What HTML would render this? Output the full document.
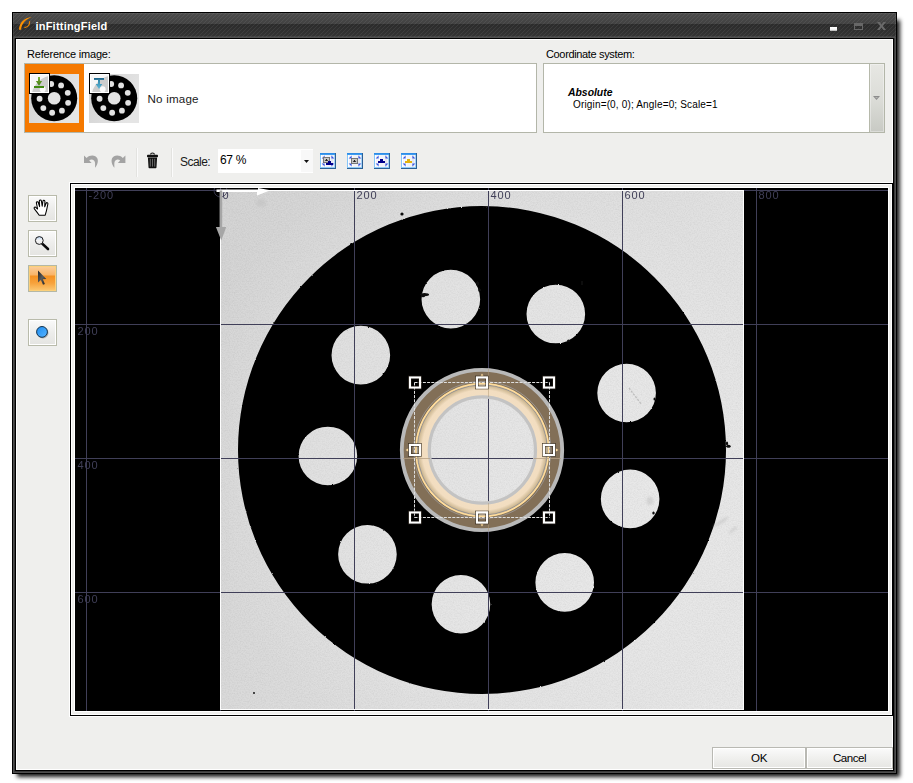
<!DOCTYPE html>
<html><head><meta charset="utf-8"><title>inFittingField</title>
<style>
*{box-sizing:border-box;margin:0;padding:0}
html,body{width:913px;height:783px;background:#fff;overflow:hidden}
body{position:relative;font-family:"Liberation Sans",sans-serif;font-size:11px;color:#000}
.abs{position:absolute}
#shadow{position:absolute;left:17px;top:20px;width:883px;height:756.5px;background:rgba(0,0,0,.9);filter:blur(2.2px)}
#win{position:absolute;left:12px;top:12px;width:885px;height:762px;background:#000}
#frame1{position:absolute;left:1px;top:1px;right:1px;bottom:1px;background:#4f4f4f}
#frame2{position:absolute;left:2px;top:2px;right:2px;bottom:2px;background:#3a3a3a}
#tbar{position:absolute;left:1px;top:1px;right:1px;height:24px;
 background:
  repeating-linear-gradient(135deg,rgba(255,255,255,.065) 0,rgba(255,255,255,.065) 0.8px,rgba(0,0,0,0) 0.8px,rgba(0,0,0,0) 2.83px),
  linear-gradient(#4a4a4a 0,#424242 11px,#2b2b2b 11px,#343434 24px);box-shadow:inset 0 0 0 1px rgba(255,255,255,.07)}
#tline{position:absolute;left:1px;right:1px;top:25px;height:1px;background:#505050}
#inner{position:absolute;left:3px;top:26px;right:3px;bottom:3px;background:#000}
#content{position:absolute;left:4px;top:27px;right:4px;bottom:4px;background:#efefed;border:1px solid #fff}
#title{position:absolute;left:35.5px;top:20px;color:#fff;font-weight:bold;font-size:11px;line-height:13px;white-space:nowrap;letter-spacing:.21px}
.lbl{position:absolute;white-space:nowrap;line-height:13px;font-size:11px}
.panel{position:absolute;background:#fff;border:1px solid #b3b6a9}
.btn{position:absolute;border:1px solid #b9b9b3;background:linear-gradient(#fbfbfb,#f1f1ef 45%,#e6e6e3);box-shadow:inset 0 0 0 1px #fff;text-align:center;font-size:11.6px;letter-spacing:-0.5px}
.tool{position:absolute;left:28px;width:29px;height:27px;border:1px solid #b9bbab;background:linear-gradient(#fafafa,#ededeb 50%,#e4e4e1);box-shadow:inset 0 0 0 1px #fff}
.tool.on{border-color:#b4b8a6;background:linear-gradient(#fbcf9e 0,#f9b468 9px,#f59122 10px,#f7a23c 17px,#fcc56e 24px,#ffd98a 25px);box-shadow:inset 0 0 0 1px #fbd07a}
#cvbox{position:absolute;left:69px;top:182px;width:824px;height:535px;background:#fff}
#cvbox2{position:absolute;left:70px;top:183px;width:823px;height:533px;background:#efefed;border:1px solid #000;box-shadow:inset 0 0 0 1px #fff}
#cvbox3{position:absolute;left:74px;top:187px;width:815px;height:525px;background:#fff}
.cv{position:absolute;left:75px;top:188px;display:block}
</style></head><body>
<div id="shadow"></div><div id="win"><div id="frame1"></div><div id="frame2"></div><div id="tbar"></div><div id="tline"></div><div id="inner"></div><div id="content"></div></div>
<svg class="abs" style="left:16px;top:14px" width="20" height="20" viewBox="16 14 20 20"><path d="M19 29.8C19 22.5 24.4 17.6 31.8 16.9C26 19.1 21.5 23.1 21.1 29.8Z" fill="#ff9200"/><path d="M29.6 21.2C30.1 24.6 28 27.1 24.4 27.6" fill="none" stroke="#f08800" stroke-width="1.1"/></svg>

<div id="title">inFittingField</div>
<div class="abs" style="left:830px;top:27px;width:7px;height:3.5px;background:linear-gradient(#fff 0,#f4f4f4 60%,#aaa 100%)"></div>
<div class="abs" style="left:854px;top:23px;width:9px;height:7px;border:1px solid #676767;border-top-width:3px"></div>
<svg class="abs" style="left:877px;top:22px" width="9" height="8" viewBox="0 0 9 8"><path d="M0 0H2.6L4.5 2.6L6.4 0H9L5.9 4L9 8H6.4L4.5 5.4L2.6 8H0L3.1 4Z" fill="#6a6a6a"/></svg>

<div class="lbl" style="left:27px;top:48px;letter-spacing:-0.2px">Reference image:</div>
<div class="lbl" style="left:546px;top:48px;letter-spacing:-0.35px">Coordinate system:</div>
<div class="panel" style="left:24px;top:63px;width:513px;height:70px"></div>
<div class="abs" style="left:25px;top:64px;width:59px;height:68px;background:#f57900"></div>
<svg class="abs" style="left:29px;top:74px" width="50" height="49" viewBox="0 0 50 49">
<defs><filter id="tb29" x="-10%" y="-10%" width="120%" height="120%"><feGaussianBlur stdDeviation="0.45"/></filter></defs>
<linearGradient id="tg29" x1="0" y1="0" x2="1" y2=".45"><stop offset="0" stop-color="#d0d0d0"/><stop offset="1" stop-color="#e5e5e5"/></linearGradient><rect width="50" height="49" fill="url(#tg29)"/>
<g filter="url(#tb29)">
<circle cx="25.2" cy="24.3" r="23.01" fill="#060606"/>
<circle cx="22.19" cy="10.00" r="2.91" fill="#e2e2e2"/>
<circle cx="32.08" cy="11.41" r="2.91" fill="#e2e2e2"/>
<circle cx="38.76" cy="18.85" r="2.91" fill="#e2e2e2"/>
<circle cx="39.09" cy="28.84" r="2.91" fill="#e2e2e2"/>
<circle cx="32.92" cy="36.71" r="2.91" fill="#e2e2e2"/>
<circle cx="23.14" cy="38.77" r="2.91" fill="#e2e2e2"/>
<circle cx="14.32" cy="34.06" r="2.91" fill="#e2e2e2"/>
<circle cx="10.59" cy="24.78" r="2.91" fill="#e2e2e2"/>
<circle cx="13.70" cy="15.28" r="2.91" fill="#e2e2e2"/>
<circle cx="25.2" cy="24.3" r="6.32" fill="#e2e2e2"/>
</g></svg>
<svg class="abs" style="left:89px;top:74px" width="50" height="49" viewBox="0 0 50 49">
<defs><filter id="tb89" x="-10%" y="-10%" width="120%" height="120%"><feGaussianBlur stdDeviation="0.45"/></filter></defs>
<linearGradient id="tg89" x1="0" y1="0" x2="1" y2=".45"><stop offset="0" stop-color="#d0d0d0"/><stop offset="1" stop-color="#e5e5e5"/></linearGradient><rect width="50" height="49" fill="url(#tg89)"/>
<g filter="url(#tb89)">
<circle cx="25.2" cy="24.3" r="23.01" fill="#060606"/>
<circle cx="22.19" cy="10.00" r="2.91" fill="#e2e2e2"/>
<circle cx="32.08" cy="11.41" r="2.91" fill="#e2e2e2"/>
<circle cx="38.76" cy="18.85" r="2.91" fill="#e2e2e2"/>
<circle cx="39.09" cy="28.84" r="2.91" fill="#e2e2e2"/>
<circle cx="32.92" cy="36.71" r="2.91" fill="#e2e2e2"/>
<circle cx="23.14" cy="38.77" r="2.91" fill="#e2e2e2"/>
<circle cx="14.32" cy="34.06" r="2.91" fill="#e2e2e2"/>
<circle cx="10.59" cy="24.78" r="2.91" fill="#e2e2e2"/>
<circle cx="13.70" cy="15.28" r="2.91" fill="#e2e2e2"/>
<circle cx="25.2" cy="24.3" r="6.32" fill="#e2e2e2"/>
</g></svg>
<div class="abs" style="left:29px;top:73px;width:21px;height:21px;border:1px solid #000;background:rgba(255,255,255,.8);box-shadow:inset 0 0 0 1px #fff"></div>
<div class="abs" style="left:89px;top:73px;width:21px;height:21px;border:1px solid #000;background:rgba(255,255,255,.8);box-shadow:inset 0 0 0 1px #fff"></div>
<svg class="abs" style="left:30px;top:74px" width="19" height="19" viewBox="0 0 19 19"><defs><linearGradient id="gg" x1="0" y1="0" x2="0" y2="1"><stop offset="0" stop-color="#7fb23a"/><stop offset="1" stop-color="#3f7a12"/></linearGradient></defs><path d="M8 3H10V7H12.2L9 11.8L5.8 7H8Z" fill="url(#gg)"/><rect x="4" y="12" width="10" height="2" fill="#418a12"/></svg>
<svg class="abs" style="left:90px;top:74px" width="19" height="19" viewBox="0 0 19 19"><defs><linearGradient id="bg2" x1="0" y1="0" x2="0" y2="1"><stop offset="0" stop-color="#2f86a8"/><stop offset="1" stop-color="#5fb6d8"/></linearGradient></defs><rect x="4" y="4" width="10" height="1.9" fill="#1f6a90"/><path d="M8 5.8H10V10H12.3L9 15.1L5.7 10H8Z" fill="url(#bg2)"/></svg>
<div class="lbl" style="left:147.5px;top:92px;font-size:11.6px;color:#1a1a1a;letter-spacing:0.2px">No image</div>
<div class="panel" style="left:543px;top:63px;width:342px;height:70px"></div>
<div class="abs" style="left:869px;top:64px;width:15px;height:68px;background:linear-gradient(#e7e7e3,#dcddd8 50%,#c8cac4);border-left:1px solid #b6b9ab;box-shadow:inset 0 0 0 1px rgba(255,255,255,.35)"></div>
<svg class="abs" style="left:873px;top:96px" width="7" height="4"><path d="M0 0H7L3.5 4Z" fill="#8c8c8c"/><path d="M2 1H5L3.5 2.6Z" fill="#b5b5b2"/></svg>
<div class="lbl" style="left:568px;top:86px;font-weight:bold;font-style:italic;font-size:10.4px">Absolute</div>
<div class="lbl" style="left:573px;top:98px;font-size:10px;letter-spacing:0.16px">Origin=(0, 0); Angle=0; Scale=1</div>
<svg class="abs" style="left:320px;top:153px" width="16" height="16" viewBox="0 0 16 16"><defs><linearGradient id="tg1" x1="0" y1="0" x2="0" y2="1"><stop offset="0" stop-color="#2484e2"/><stop offset="1" stop-color="#48a4f4"/></linearGradient></defs>
<rect width="16" height="16" fill="#f1f3f8"/>
<rect x="1" y="2" width="1" height="12" fill="#fff"/><rect x="3" y="2" width="1" height="12" fill="#fff" opacity=".6"/><rect x="5" y="2" width="1" height="12" fill="#fff" opacity=".6"/><rect x="11" y="2" width="2" height="12" fill="#e4e7f0"/>
<rect width="16" height="2" fill="url(#tg1)"/>
<rect x="0" y="2" width="1" height="14" fill="#86c6f8"/>
<rect x="14" y="2" width="1" height="12" fill="#a6d4f8"/>
<rect x="1" y="14" width="14" height="1" fill="#8ccaf8"/>
<rect x="15" y="0" width="1" height="16" fill="#2c5f94"/>
<rect x="0" y="15" width="16" height="1" fill="#2c5f94"/>
<path d="M4.6 2.6V5.4H1.6Z M11.4 2.6V5.4H14.4Z M4.6 13.4V10.6H1.6Z M11.4 13.4V10.6H14.4Z" fill="#3a58e2"/><rect x="3" y="4" width="7" height="6" fill="#6e6e6e"/><rect x="3.9" y="4.9" width="5.2" height="4.2" fill="#c9c9c9"/><path d="M4.9 7.9H8.1V7.2H7.1V6.0H5.9V7.2H4.9Z" fill="#222"/><path d="M8 8H11V10H13V12H6V10H8Z" fill="#00008b"/></svg>
<svg class="abs" style="left:347px;top:153px" width="16" height="16" viewBox="0 0 16 16"><defs><linearGradient id="tg2" x1="0" y1="0" x2="0" y2="1"><stop offset="0" stop-color="#2484e2"/><stop offset="1" stop-color="#48a4f4"/></linearGradient></defs>
<rect width="16" height="16" fill="#f1f3f8"/>
<rect x="1" y="2" width="1" height="12" fill="#fff"/><rect x="3" y="2" width="1" height="12" fill="#fff" opacity=".6"/><rect x="5" y="2" width="1" height="12" fill="#fff" opacity=".6"/><rect x="11" y="2" width="2" height="12" fill="#e4e7f0"/>
<rect width="16" height="2" fill="url(#tg2)"/>
<rect x="0" y="2" width="1" height="14" fill="#86c6f8"/>
<rect x="14" y="2" width="1" height="12" fill="#a6d4f8"/>
<rect x="1" y="14" width="14" height="1" fill="#8ccaf8"/>
<rect x="15" y="0" width="1" height="16" fill="#2c5f94"/>
<rect x="0" y="15" width="16" height="1" fill="#2c5f94"/>
<path d="M4.6 2.6V5.4H1.6Z M11.4 2.6V5.4H14.4Z M4.6 13.4V10.6H1.6Z M11.4 13.4V10.6H14.4Z" fill="#3a58e2"/><rect x="4" y="5" width="7" height="6" fill="#6e6e6e"/><rect x="4.9" y="5.9" width="5.2" height="4.2" fill="#c9c9c9"/><path d="M5.9 8.9H9.1V8.2H8.1V7.0H6.9V8.2H5.9Z" fill="#222"/></svg>
<svg class="abs" style="left:374px;top:153px" width="16" height="16" viewBox="0 0 16 16"><defs><linearGradient id="tg3" x1="0" y1="0" x2="0" y2="1"><stop offset="0" stop-color="#2484e2"/><stop offset="1" stop-color="#48a4f4"/></linearGradient></defs>
<rect width="16" height="16" fill="#f1f3f8"/>
<rect x="1" y="2" width="1" height="12" fill="#fff"/><rect x="3" y="2" width="1" height="12" fill="#fff" opacity=".6"/><rect x="5" y="2" width="1" height="12" fill="#fff" opacity=".6"/><rect x="11" y="2" width="2" height="12" fill="#e4e7f0"/>
<rect width="16" height="2" fill="url(#tg3)"/>
<rect x="0" y="2" width="1" height="14" fill="#86c6f8"/>
<rect x="14" y="2" width="1" height="12" fill="#a6d4f8"/>
<rect x="1" y="14" width="14" height="1" fill="#8ccaf8"/>
<rect x="15" y="0" width="1" height="16" fill="#2c5f94"/>
<rect x="0" y="15" width="16" height="1" fill="#2c5f94"/>
<path d="M4.6 2.6V5.4H1.6Z M11.4 2.6V5.4H14.4Z M4.6 13.4V10.6H1.6Z M11.4 13.4V10.6H14.4Z" fill="#3a58e2"/><path d="M6 6H9V8H11V10H4V8H6Z" fill="#00008b"/></svg>
<svg class="abs" style="left:401px;top:153px" width="16" height="16" viewBox="0 0 16 16"><defs><linearGradient id="tg4" x1="0" y1="0" x2="0" y2="1"><stop offset="0" stop-color="#2484e2"/><stop offset="1" stop-color="#48a4f4"/></linearGradient></defs>
<rect width="16" height="16" fill="#f1f3f8"/>
<rect x="1" y="2" width="1" height="12" fill="#fff"/><rect x="3" y="2" width="1" height="12" fill="#fff" opacity=".6"/><rect x="5" y="2" width="1" height="12" fill="#fff" opacity=".6"/><rect x="11" y="2" width="2" height="12" fill="#e4e7f0"/>
<rect width="16" height="2" fill="url(#tg4)"/>
<rect x="0" y="2" width="1" height="14" fill="#86c6f8"/>
<rect x="14" y="2" width="1" height="12" fill="#a6d4f8"/>
<rect x="1" y="14" width="14" height="1" fill="#8ccaf8"/>
<rect x="15" y="0" width="1" height="16" fill="#2c5f94"/>
<rect x="0" y="15" width="16" height="1" fill="#2c5f94"/>
<path d="M4.6 2.6V5.4H1.6Z M11.4 2.6V5.4H14.4Z M4.6 13.4V10.6H1.6Z M11.4 13.4V10.6H14.4Z" fill="#3a58e2"/><path d="M6 6H9V8H11V10H4V8H6Z" fill="#e2b20e"/></svg>
<svg class="abs" style="left:84px;top:155px" width="15" height="13" viewBox="0 0 15 13"><path d="M0 0.4V7.9H7.6L5.2 5.5C7.2 3.9 10.2 4.4 10.9 7.2C11.3 9 10.9 10.8 11.1 12.8C13.2 10.2 14.6 6.8 13.4 3.6C11.8 0 6.2 -0.6 2.6 3Z" fill="#a3a3a3"/></svg>
<svg class="abs" style="left:111px;top:155px" width="15" height="13" viewBox="0 0 15 13"><g transform="translate(14.4,0) scale(-1,1)"><path d="M0 0.4V7.9H7.6L5.2 5.5C7.2 3.9 10.2 4.4 10.9 7.2C11.3 9 10.9 10.8 11.1 12.8C13.2 10.2 14.6 6.8 13.4 3.6C11.8 0 6.2 -0.6 2.6 3Z" fill="#a3a3a3"/></g></svg>
<div class="abs" style="left:136px;top:148px;width:1px;height:29px;background:#e3e3e0"></div><div class="abs" style="left:137px;top:148px;width:1px;height:29px;background:#fbfbfb"></div>
<div class="abs" style="left:171px;top:148px;width:1px;height:29px;background:#e3e3e0"></div><div class="abs" style="left:172px;top:148px;width:1px;height:29px;background:#fbfbfb"></div>
<svg class="abs" style="left:146px;top:152px" width="13" height="17" viewBox="0 0 13 17"><path d="M4.6 2.6C4.6 0.4 8.4 0.4 8.4 2.6" fill="none" stroke="#111" stroke-width="1.1"/><rect x="1" y="2.8" width="11" height="2.4" rx="0.8" fill="#111"/><path d="M1.9 5.6H11.1L10.5 15.2C10.45 15.9 10 16.2 9.4 16.2H3.6C3 16.2 2.55 15.9 2.5 15.2Z" fill="#111"/><path d="M4.3 6.8V14.6M6.5 6.8V14.6M8.7 6.8V14.6" stroke="#7d7d7d" stroke-width="0.8"/></svg>
<div class="lbl" style="left:180px;top:156px;font-size:12px;color:#1a1a1a;letter-spacing:-0.55px">Scale:</div>
<div class="abs" style="left:218px;top:149px;width:95px;height:24px;background:#fff"></div><div class="abs" style="left:301px;top:150px;width:12px;height:22px;background:#f8f8f8"></div>
<div class="lbl" style="left:220px;top:154px;font-size:12px;letter-spacing:-0.3px">67 %</div>
<svg class="abs" style="left:304px;top:160px" width="5" height="3"><path d="M0 0H5L2.5 3Z" fill="#111"/></svg>
<div class="tool" style="top:195px"></div>
<div class="tool" style="top:230px"></div>
<div class="tool on" style="top:265px"></div>
<div class="tool" style="top:319px"></div>
<svg class="abs" style="left:33px;top:199px" width="19" height="18" viewBox="0 0 19 18"><path d="M6.2 16.2C4.8 14.2 3 11.8 1.4 9.8C0.6 8.8 1.6 7.6 2.7 8.3L4.6 10L3.4 3.9C3.1 2.6 4.9 2.2 5.3 3.5L6.6 7.6L6.3 2.1C6.2 0.8 8.1 0.6 8.4 1.9L9.2 7.2L9.9 2.2C10.1 0.9 11.9 1.1 11.9 2.4L11.7 7.8L13.1 4.3C13.6 3.1 15.2 3.7 14.9 4.9L13.9 9.6C13.6 11.6 13 13.6 12.2 16.2Z" fill="#fff" stroke="#000" stroke-width="1.05" stroke-linejoin="round"/></svg>
<svg class="abs" style="left:32px;top:233px" width="20" height="20" viewBox="0 0 20 20"><defs><linearGradient id="lens" x1="0" y1="0" x2="0" y2="1"><stop offset="0" stop-color="#b8d4f4"/><stop offset=".45" stop-color="#f4f4f4"/><stop offset="1" stop-color="#ececec"/></linearGradient></defs><path d="M10.2 10.6L16 16" stroke="#0a0a0a" stroke-width="2.6" stroke-linecap="round"/><circle cx="7.3" cy="7.5" r="3.9" fill="url(#lens)" stroke="#1a1a1a" stroke-width="1"/></svg>
<svg class="abs" style="left:36px;top:269px" width="12" height="18" viewBox="0 0 12 18"><defs><linearGradient id="cur" x1="0" y1="0" x2="1" y2="1"><stop offset="0" stop-color="#222"/><stop offset=".5" stop-color="#5a5a5a"/><stop offset="1" stop-color="#1a1a1a"/></linearGradient></defs><path d="M2 1.6L2 13.4L4.9 10.9L7 15.7L8.9 14.9L6.8 10.2L10.3 9.9Z" fill="url(#cur)"/></svg>
<svg class="abs" style="left:33px;top:323px" width="20" height="20" viewBox="0 0 20 20"><defs><linearGradient id="bl" x1="0" y1="0" x2="1" y2="1"><stop offset="0" stop-color="#1c8cf0"/><stop offset="1" stop-color="#58b4ff"/></linearGradient></defs><circle cx="9.9" cy="9.9" r="5.6" fill="#9a9a9a" opacity=".7"/><circle cx="9" cy="8.9" r="5.4" fill="url(#bl)" stroke="#12324e" stroke-width="1"/></svg>

<div id="cvbox"></div><div id="cvbox2"></div><div id="cvbox3"></div>
<svg class="cv" width="813" height="523" viewBox="75 188 813 523" font-family="Liberation Sans, sans-serif">
<defs>
<linearGradient id="bgv" gradientUnits="userSpaceOnUse" x1="220" y1="190" x2="861" y2="470"><stop offset="0" stop-color="#cfcfcf"/><stop offset="1" stop-color="#e6e6e6"/></linearGradient>
<radialGradient id="bump" gradientUnits="userSpaceOnUse" cx="482" cy="450" r="300"><stop offset="0" stop-color="#fff" stop-opacity=".22"/><stop offset="0.58" stop-color="#fff" stop-opacity=".2"/><stop offset="1" stop-color="#fff" stop-opacity="0"/></radialGradient>
<filter id="soft" x="-5%" y="-5%" width="110%" height="110%"><feTurbulence type="fractalNoise" baseFrequency="0.28" numOctaves="2" seed="3" result="n"/><feDisplacementMap in="SourceGraphic" in2="n" scale="1.7" xChannelSelector="R" yChannelSelector="G" result="d"/><feGaussianBlur in="d" stdDeviation="0.5"/></filter>
<filter id="soft2" x="-20%" y="-20%" width="140%" height="140%"><feGaussianBlur stdDeviation="0.9"/></filter>
<radialGradient id="cream" gradientUnits="userSpaceOnUse" cx="482.25" cy="450" r="66"><stop offset="0.7879" stop-color="#f3dfc3"/><stop offset="0.9091" stop-color="#f2ddc0"/><stop offset="0.9788" stop-color="#cab58f"/><stop offset="1.0000" stop-color="#c4af8a"/></radialGradient>
<filter id="noise" x="0" y="0" width="100%" height="100%" color-interpolation-filters="sRGB"><feTurbulence type="fractalNoise" baseFrequency="0.75" numOctaves="2" seed="7" result="t"/><feColorMatrix in="t" type="matrix" values="0.9 0 0 0 0.42  0.9 0 0 0 0.42  0.9 0 0 0 0.42  0 0 0 0 0.1"/></filter>
<clipPath id="imgclip"><rect x="220" y="190" width="524" height="520"/></clipPath>
</defs>
<rect x="75" y="188" width="813" height="523" fill="#000"/>
<rect x="220" y="190" width="524" height="520" fill="url(#bgv)"/>
<rect x="220" y="190" width="524" height="520" fill="url(#bump)"/>
<rect x="221" y="191" width="522" height="518" filter="url(#noise)"/>
<g clip-path="url(#imgclip)"><g filter="url(#soft)">
<path d="M238.00 450.00a244.0 244.0 0 1 0 488.0 0a244.0 244.0 0 1 0 -488.0 0ZM421.54 299.13a29.3 29.3 0 1 0 58.6 0a29.3 29.3 0 1 0 -58.6 0ZM526.51 314.07a29.3 29.3 0 1 0 58.6 0a29.3 29.3 0 1 0 -58.6 0ZM597.31 392.99a29.3 29.3 0 1 0 58.6 0a29.3 29.3 0 1 0 -58.6 0ZM600.83 498.95a29.3 29.3 0 1 0 58.6 0a29.3 29.3 0 1 0 -58.6 0ZM535.41 582.39a29.3 29.3 0 1 0 58.6 0a29.3 29.3 0 1 0 -58.6 0ZM431.66 604.25a29.3 29.3 0 1 0 58.6 0a29.3 29.3 0 1 0 -58.6 0ZM338.13 554.31a29.3 29.3 0 1 0 58.6 0a29.3 29.3 0 1 0 -58.6 0ZM298.59 455.94a29.3 29.3 0 1 0 58.6 0a29.3 29.3 0 1 0 -58.6 0ZM331.53 355.16a29.3 29.3 0 1 0 58.6 0a29.3 29.3 0 1 0 -58.6 0ZM415.40 450.00a66.6 66.6 0 1 0 133.2 0a66.6 66.6 0 1 0 -133.2 0Z" fill="#050505" fill-rule="evenodd"/>
<ellipse cx="424.5" cy="294.6" rx="4.6" ry="1.7" fill="#0a0a0a"/>
<ellipse cx="423" cy="296.3" rx="2" ry="1" fill="#0a0a0a"/>
<ellipse cx="477.5" cy="283.5" rx="1.2" ry="2.5" fill="#0a0a0a"/>
<ellipse cx="479.5" cy="290" rx="1.2" ry="2" fill="#0a0a0a"/>
<ellipse cx="438" cy="328.6" rx="1.6" ry="1" fill="#0a0a0a"/>
<ellipse cx="582" cy="283" rx="1.4" ry="2.4" fill="#0a0a0a"/>
<ellipse cx="568.5" cy="341" rx="1.5" ry="1.6" fill="#0a0a0a"/>
<ellipse cx="728.5" cy="446.2" rx="2.2" ry="1.5" fill="#0a0a0a"/>
<ellipse cx="727" cy="443.5" rx="1.1" ry="2" fill="#0a0a0a"/>
<ellipse cx="402" cy="214" rx="1.6" ry="1.6" fill="#0a0a0a"/>
<ellipse cx="254" cy="693" rx="0.9" ry="0.9" fill="#0a0a0a"/>
<ellipse cx="654.5" cy="399" rx="1" ry="1.6" fill="#0a0a0a"/>
<ellipse cx="653.5" cy="513" rx="1.2" ry="1.6" fill="#0a0a0a"/>
</g>
<g filter="url(#soft2)" opacity=".6"><ellipse cx="261" cy="203" rx="5" ry="4" fill="#c2c2c2"/><ellipse cx="650" cy="501" rx="3.5" ry="4" fill="#c6c6c6"/><ellipse cx="721" cy="522" rx="9" ry="1.6" fill="#c4c4c4" transform="rotate(-33 721 522)"/><ellipse cx="733" cy="530" rx="5" ry="1.4" fill="#c4c4c4" transform="rotate(-40 733 530)"/></g>
<path d="M629 388L641.5 404.5" stroke="#b4b4b4" stroke-width="1.3" stroke-dasharray="2.2 1.3" opacity=".8"/>
</g>
<rect x="86" y="188" width="1" height="523" fill="#403f58"/>
<rect x="220" y="188" width="1" height="523" fill="#403f58"/>
<rect x="354" y="188" width="1" height="523" fill="#403f58"/>
<rect x="488" y="188" width="1" height="523" fill="#403f58"/>
<rect x="622" y="188" width="1" height="523" fill="#403f58"/>
<rect x="756" y="188" width="1" height="523" fill="#403f58"/>
<rect x="75" y="190" width="813" height="1" fill="#403f58"/>
<rect x="75" y="324" width="813" height="1" fill="#403f58"/>
<rect x="75" y="458" width="813" height="1" fill="#403f58"/>
<rect x="75" y="592" width="813" height="1" fill="#403f58"/>
<rect x="220.5" y="190.5" width="523" height="519" fill="none" stroke="#fdfdfd" stroke-width="1"/>
<text x="88.6" y="199" font-size="11" letter-spacing=".8" fill="#403f58">-200</text>
<text x="222.6" y="199" font-size="11" letter-spacing=".8" fill="#403f58">0</text>
<text x="356.6" y="199" font-size="11" letter-spacing=".8" fill="#403f58">200</text>
<text x="490.6" y="199" font-size="11" letter-spacing=".8" fill="#403f58">400</text>
<text x="624.6" y="199" font-size="11" letter-spacing=".8" fill="#403f58">600</text>
<text x="758.6" y="199" font-size="11" letter-spacing=".8" fill="#403f58">800</text>
<text x="77.6" y="335" font-size="11" letter-spacing=".8" fill="#403f58">200</text>
<text x="77.6" y="469" font-size="11" letter-spacing=".8" fill="#403f58">400</text>
<text x="77.6" y="603" font-size="11" letter-spacing=".8" fill="#403f58">600</text>
<circle cx="220.5" cy="190.5" r="6.5" fill="none" stroke="#403f58" stroke-width=".8"/>
<path d="M216.5 189.6H258V187.9L270.5 190.3L257 195.6V191.9H216.5Z" fill="#fff"/>
<path d="M219.6 190.5H222.2V227H226.2L221.3 240.5L215.9 227H219.6Z" fill="#a6a6a6"/>
<circle cx="482.0" cy="450.0" r="72.5" fill="none" stroke="#826f57" stroke-width="14"/>
<circle cx="482.25" cy="450.0" r="59" fill="none" stroke="url(#cream)" stroke-width="14"/>
<circle cx="482.25" cy="450.0" r="65.1" fill="none" stroke="#8e8e94" stroke-width=".9"/>
<circle cx="482.25" cy="450.0" r="66.5" fill="none" stroke="#ffdc9c" stroke-width="1.9"/>
<circle cx="482.25" cy="450.0" r="67.7" fill="none" stroke="#75644c" stroke-width=".7"/>
<circle cx="482.3" cy="450.0" r="68.6" fill="none" stroke="#a3a3a8" stroke-width=".7"/>
<circle cx="482.0" cy="450.0" r="80.2" fill="none" stroke="#b9b9b9" stroke-width="3.8"/>
<circle cx="482.4" cy="450.0" r="53.1" fill="none" stroke="#c3c3c3" stroke-width="3.2"/>
<rect x="488" y="369" width="1" height="28" fill="#b09a78" opacity=".5"/><rect x="488" y="503" width="1" height="28" fill="#b09a78" opacity=".5"/>
<rect x="403" y="458" width="27" height="1" fill="#b5a084" opacity=".8"/><rect x="534" y="458" width="27" height="1" fill="#b5a084" opacity=".8"/>
<path d="M405.6 450L408.4 448.3V451.7Z M558.4 450L555.6 448.3V451.7Z M482 373.4L480.3 376.2H483.7Z M482 526.6L480.3 523.8H483.7Z" fill="#ffdc9e"/>
<path d="M414.5 382.5H549.5M414.5 517.5H549.5M414.5 382.5V517.5M549.5 382.5V517.5" fill="none" stroke="#dedede" stroke-width="1" stroke-dasharray="3 1.2"/>
<rect x="408.55" y="376.05" width="12.9" height="12.9" fill="none" stroke="#2a2218" stroke-width=".7" opacity=".85"/><rect x="411.25" y="378.75" width="7.5" height="7.5" fill="none" stroke="#2a2218" stroke-width=".7" opacity=".85"/><rect x="409.95" y="377.45" width="10.1" height="10.1" fill="none" stroke="#fff" stroke-width="2.1"/>
<rect x="408.55" y="443.55" width="12.9" height="12.9" fill="none" stroke="#2a2218" stroke-width=".7" opacity=".85"/><rect x="411.25" y="446.25" width="7.5" height="7.5" fill="none" stroke="#2a2218" stroke-width=".7" opacity=".85"/><rect x="409.95" y="444.95" width="10.1" height="10.1" fill="none" stroke="#fff" stroke-width="2.1"/>
<rect x="408.55" y="511.05" width="12.9" height="12.9" fill="none" stroke="#2a2218" stroke-width=".7" opacity=".85"/><rect x="411.25" y="513.75" width="7.5" height="7.5" fill="none" stroke="#2a2218" stroke-width=".7" opacity=".85"/><rect x="409.95" y="512.45" width="10.1" height="10.1" fill="none" stroke="#fff" stroke-width="2.1"/>
<rect x="475.55" y="376.05" width="12.9" height="12.9" fill="none" stroke="#2a2218" stroke-width=".7" opacity=".85"/><rect x="478.25" y="378.75" width="7.5" height="7.5" fill="none" stroke="#2a2218" stroke-width=".7" opacity=".85"/><rect x="476.95" y="377.45" width="10.1" height="10.1" fill="none" stroke="#fff" stroke-width="2.1"/>
<rect x="475.55" y="511.05" width="12.9" height="12.9" fill="none" stroke="#2a2218" stroke-width=".7" opacity=".85"/><rect x="478.25" y="513.75" width="7.5" height="7.5" fill="none" stroke="#2a2218" stroke-width=".7" opacity=".85"/><rect x="476.95" y="512.45" width="10.1" height="10.1" fill="none" stroke="#fff" stroke-width="2.1"/>
<rect x="542.55" y="376.05" width="12.9" height="12.9" fill="none" stroke="#2a2218" stroke-width=".7" opacity=".85"/><rect x="545.25" y="378.75" width="7.5" height="7.5" fill="none" stroke="#2a2218" stroke-width=".7" opacity=".85"/><rect x="543.95" y="377.45" width="10.1" height="10.1" fill="none" stroke="#fff" stroke-width="2.1"/>
<rect x="542.55" y="443.55" width="12.9" height="12.9" fill="none" stroke="#2a2218" stroke-width=".7" opacity=".85"/><rect x="545.25" y="446.25" width="7.5" height="7.5" fill="none" stroke="#2a2218" stroke-width=".7" opacity=".85"/><rect x="543.95" y="444.95" width="10.1" height="10.1" fill="none" stroke="#fff" stroke-width="2.1"/>
<rect x="542.55" y="511.05" width="12.9" height="12.9" fill="none" stroke="#2a2218" stroke-width=".7" opacity=".85"/><rect x="545.25" y="513.75" width="7.5" height="7.5" fill="none" stroke="#2a2218" stroke-width=".7" opacity=".85"/><rect x="543.95" y="512.45" width="10.1" height="10.1" fill="none" stroke="#fff" stroke-width="2.1"/>
</svg>
<div class="btn" style="left:712px;top:747px;width:94px;height:22px;line-height:20px">OK</div>
<div class="btn" style="left:806px;top:747px;width:87px;height:22px;line-height:20px">Cancel</div>
</body></html>
